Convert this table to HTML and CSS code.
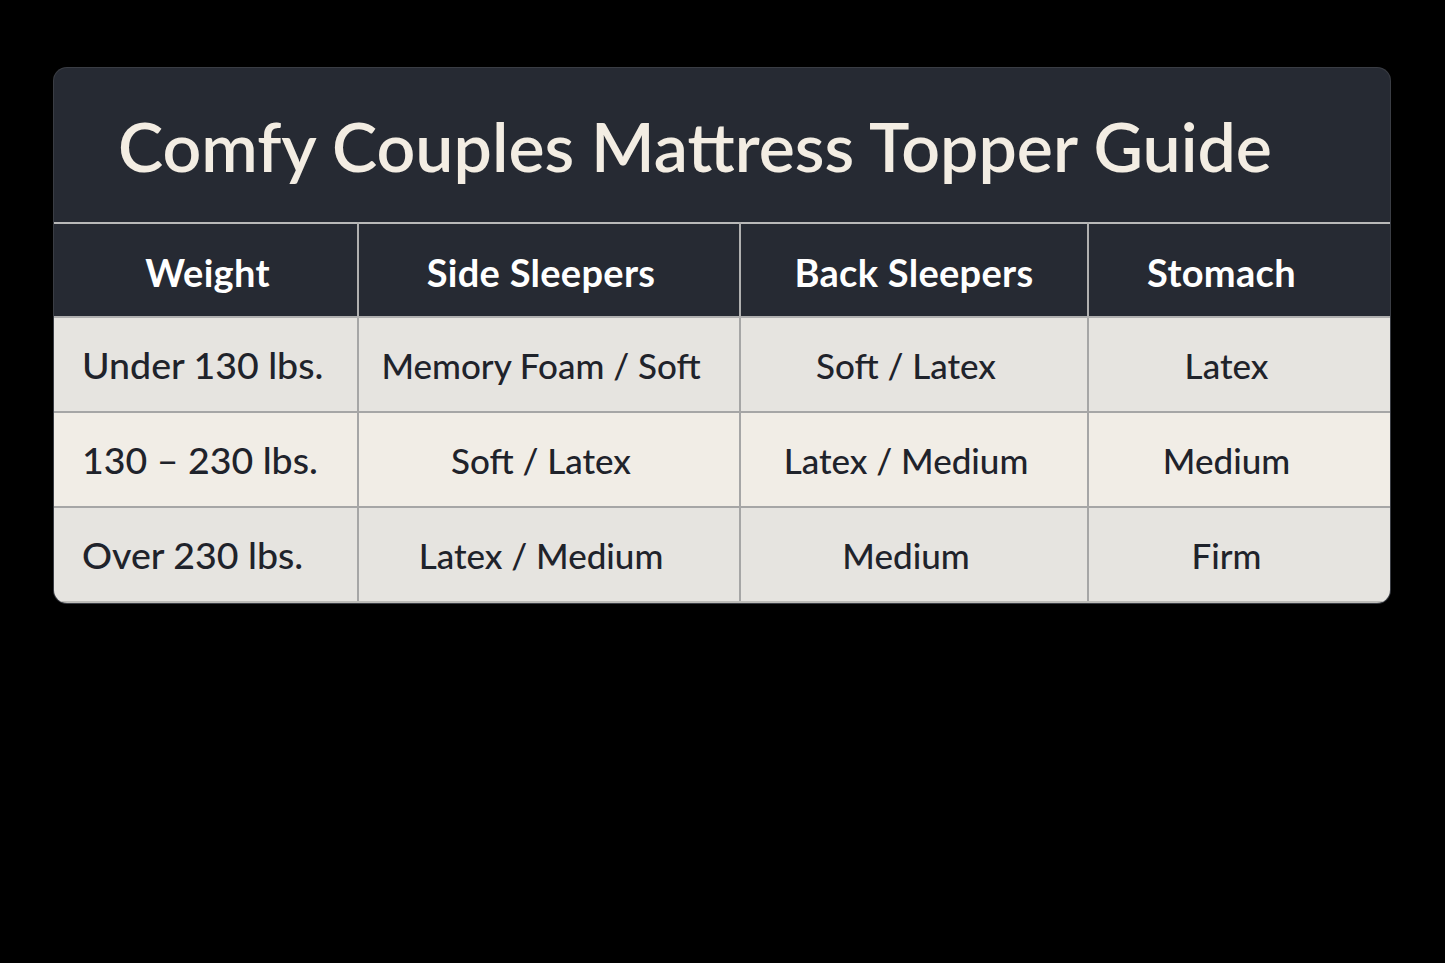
FILE: index.html
```html
<!DOCTYPE html>
<html lang="en">
<head>
<meta charset="utf-8">
<title>Comfy Couples Mattress Topper Guide</title>
<link rel="stylesheet" href="styles.css">
</head>
<body>
<main class="page">
  <section class="card">
    <h1 class="title">Comfy Couples Mattress Topper Guide</h1>
    <table class="guide">
      <colgroup>
        <col class="c1"><col class="c2"><col class="c3"><col class="c4">
      </colgroup>
      <thead>
        <tr>
          <th>Weight</th>
          <th>Side Sleepers</th>
          <th>Back Sleepers</th>
          <th>Stomach</th>
        </tr>
      </thead>
      <tbody>
        <tr class="odd">
          <td class="first">Under 130 lbs.</td>
          <td>Memory Foam / Soft</td>
          <td>Soft / Latex</td>
          <td>Latex</td>
        </tr>
        <tr class="even">
          <td class="first">130 – 230 lbs.</td>
          <td>Soft / Latex</td>
          <td>Latex / Medium</td>
          <td>Medium</td>
        </tr>
        <tr class="odd">
          <td class="first">Over 230 lbs.</td>
          <td>Latex / Medium</td>
          <td>Medium</td>
          <td>Firm</td>
        </tr>
      </tbody>
    </table>
  </section>
</main>
</body>
</html>
```
FILE: styles.css
```css
html, body {
  margin: 0;
  padding: 0;
  background: #000;
}
body {
  font-family: Lato, "Open Sans", "Liberation Sans", sans-serif;
  width: 1445px;
  height: 963px;
  overflow: hidden;
}
.page {
  padding: 68px 55px 0 54px;
}
.card {
  width: 1336px;
  background: #262a33;
  border-radius: 13px;
  overflow: hidden;
  box-shadow: 0 0 0 1px #3a3d44;
}
.title {
  margin: 0;
  height: 154px;
  box-sizing: border-box;
  padding: 0 0 0 64px;
  display: flex;
  align-items: center;
  font-size: 68px;
  font-weight: 600;
  color: #f3ede3;
  letter-spacing: 0;
}
.guide {
  width: 100%;
  border-collapse: collapse;
  table-layout: fixed;
  border-top: 2px solid #b9b9b9;
  border-bottom: 2px solid #bdbcb8;
}
.c1 { width: 304px; }
.c2 { width: 382px; }
.c3 { width: 348px; }
.c4 { width: 302px; }
.guide th,
.guide td {
  border: 2px solid #a6a6a6;
  text-align: center;
  padding: 0 16px 0 0;
}
.guide tr > :first-child { border-left: none; }
.guide tr > :last-child { border-right: none; }
.guide th {
  height: 88px;
  background: #262a33;
  color: #ffffff;
  font-size: 38px;
  font-weight: 700;
  letter-spacing: 0.3px;
  border-top: none;
  border-color: #b0b0b0;
  padding-top: 4px;
}
.guide th:nth-child(1) { padding-right: 0; padding-left: 4px; }
.guide th:nth-child(3) { padding-right: 0; }
.guide th:nth-child(4) { padding-right: 36px; }
.guide td {
  height: 93px;
  color: #1f232b;
  font-size: 35px;
  font-weight: 500;
}
.guide tbody tr:last-child td {
  height: 93px;
  border-bottom-color: #bdbcb8;
}
.guide td:nth-child(4) { padding-right: 26px; }
.guide td.first {
  text-align: left;
  padding: 0 0 0 28px;
  font-size: 37.5px;
}
.odd td { background: #e6e4e0; }
.even td { background: #f1ede6; }
```
